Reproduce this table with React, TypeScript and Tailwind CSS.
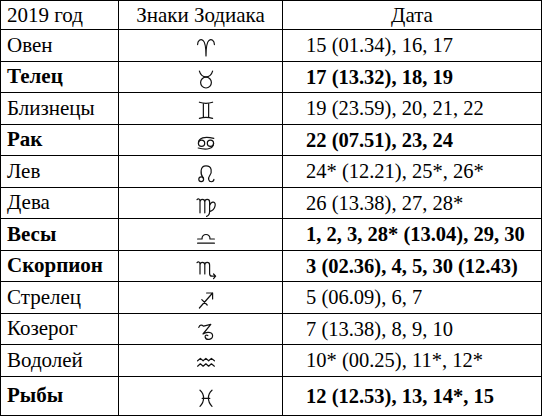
import React from "react";

type Row = { name: string; sign: string; date: string; bold?: boolean };

const rows: Row[] = [
  { name: "Овен", sign: "aries", date: "15 (01.34), 16, 17" },
  { name: "Телец", sign: "taurus", date: "17 (13.32), 18, 19", bold: true },
  { name: "Близнецы", sign: "gemini", date: "19 (23.59), 20, 21, 22" },
  { name: "Рак", sign: "cancer", date: "22 (07.51), 23, 24", bold: true },
  { name: "Лев", sign: "leo", date: "24* (12.21), 25*, 26*" },
  { name: "Дева", sign: "virgo", date: "26 (13.38), 27, 28*" },
  { name: "Весы", sign: "libra", date: "1, 2, 3, 28* (13.04), 29, 30", bold: true },
  { name: "Скорпион", sign: "scorpio", date: "3 (02.36), 4, 5, 30 (12.43)", bold: true },
  { name: "Стрелец", sign: "sagittarius", date: "5 (06.09), 6, 7" },
  { name: "Козерог", sign: "capricorn", date: "7 (13.38), 8, 9, 10" },
  { name: "Водолей", sign: "aquarius", date: "10* (00.25), 11*, 12*" },
  { name: "Рыбы", sign: "pisces", date: "12 (12.53), 13, 14*, 15", bold: true },
];

function Sign({ name }: { name: string }) {
  let content: React.ReactNode = null;
  switch (name) {
    case "aries":
      content = (
        <path d="M3,8 C3,4.5 5.5,3 7.5,4.5 C9.3,6 10,10 10,17.5 M17,8 C17,4.5 14.5,3 12.5,4.5 C10.7,6 10,10 10,17.5" />
      );
      break;
    case "taurus":
      content = (
        <>
          <path d="M4.5,3.5 C5.5,7 8,8.2 10,8.2 C12,8.2 14.5,7 15.5,3.5" />
          <circle cx="10" cy="13" r="4.5" />
        </>
      );
      break;
    case "gemini":
      content = (
        <path d="M4.5,3.5 Q10,5.3 15.5,3.5 M4.5,17 Q10,15.2 15.5,17 M7.8,4.6 V16 M12.2,4.6 V16" />
      );
      break;
    case "cancer":
      content = (
        <>
          <circle cx="6.3" cy="11" r="2.6" />
          <path d="M3.7,11 C3.7,6.5 9,5 16.5,7" />
          <circle cx="13.7" cy="11" r="2.6" />
          <path d="M16.3,11 C16.3,15.5 11,17 3.5,15" />
        </>
      );
      break;
    case "leo":
      content = (
        <>
          <circle cx="6" cy="15.2" r="2" />
          <path d="M7.6,14 C5.2,11 4.8,4 10,4 C15.2,4 15.2,9.5 13,12.3 C11.6,14.2 12,17.3 14.4,17.3 C15.9,17.3 16.6,16.4 16.6,15.3" />
        </>
      );
      break;
    case "virgo":
      content = (
        <path d="M2.5,5.5 C3.5,4.5 5,4.8 5,7 V16.5 M5,7.5 C5,4.5 9,4.5 9,7.5 V16.5 M9,7.5 C9,4.5 13,4.5 13,7.5 V15.5 C13,17.5 12,19 10.5,19.5 M13,10.5 C14.5,6 18.5,7 17.5,11 C17,13.5 15,15 13,15.5" />
      );
      break;
    case "libra":
      content = <path d="M3,16 H17 M3,12.5 H6.7 C6.2,7.5 13.8,7.5 13.3,12.5 H17" />;
      break;
    case "scorpio":
      content = (
        <path d="M2.5,5.5 C3.5,4.5 5,4.8 5,7 V15 M5,7.5 C5,4.5 9,4.5 9,7.5 V15 M9,7.5 C9,4.5 13,4.5 13,7.5 V14.5 C13,16 13.8,16.8 15,16.8 H18 M16.3,15 L18,16.8 L16.3,18.8" />
      );
      break;
    case "sagittarius":
      content = <path d="M4.5,17.5 L15.5,5 M10.5,5 H15.5 V10 M6.5,10.5 L11,15" />;
      break;
    case "capricorn":
      content = (
        <path d="M4,7 C4.8,4.6 6.6,4.8 8,6 L14,4.5 L7.5,12.5 C10,10.5 15.5,10.5 15.5,14 C15.5,17.5 10,18 9.3,15 C9,13.5 10.5,13 11.5,13.8" />
      );
      break;
    case "aquarius":
      content = (
        <path d="M3,9 L5.3,7 L7.6,9 L9.9,7 L12.2,9 L14.5,7 L17,9 M3,13.5 L5.3,11.5 L7.6,13.5 L9.9,11.5 L12.2,13.5 L14.5,11.5 L17,13.5" />
      );
      break;
    case "pisces":
      content = <path d="M5,3.5 C9,7 9,13 5,17 M15,3.5 C11,7 11,13 15,17 M6.8,10.3 H13.2" />;
      break;
  }
  return (
    <svg
      width="24"
      height="24"
      viewBox="0 0 20 20"
      fill="none"
      stroke="#111"
      strokeWidth="1"
      strokeLinecap="round"
      strokeLinejoin="round"
      className="ml-[10px] mt-[4px]"
    >
      {content}
    </svg>
  );
}

export default function App() {
  return (
    <div className="w-[542px] h-[418px] bg-white text-black font-['Liberation_Serif',serif] leading-none">
      <div className="w-[542px] border-l border-t border-black">
        <div className="grid grid-cols-[118px_164px_259px] h-[29px] text-[21px]">
          <div className="border-r border-b border-black flex items-center pl-[6px]">2019 год</div>
          <div className="border-r border-b border-black flex items-center justify-center">Знаки Зодиака</div>
          <div className="border-r border-b border-black flex items-center justify-center">Дата</div>
        </div>
        {rows.map((r, i) => (
          <div
            key={r.name}
            className={`grid grid-cols-[118px_164px_259px] ${i === rows.length - 1 ? "h-[39.5px]" : "h-[31.5px]"} ${r.bold ? "font-bold" : ""}`}
          >
            <div className="border-r border-b border-black flex items-center pl-[6px] text-[21px]">{r.name}</div>
            <div className="border-r border-b border-black flex items-center justify-center">
              <Sign name={r.sign} />
            </div>
            <div className="border-r border-b border-black flex items-center pl-[23px] text-[20.5px]">{r.date}</div>
          </div>
        ))}
      </div>
    </div>
  );
}
